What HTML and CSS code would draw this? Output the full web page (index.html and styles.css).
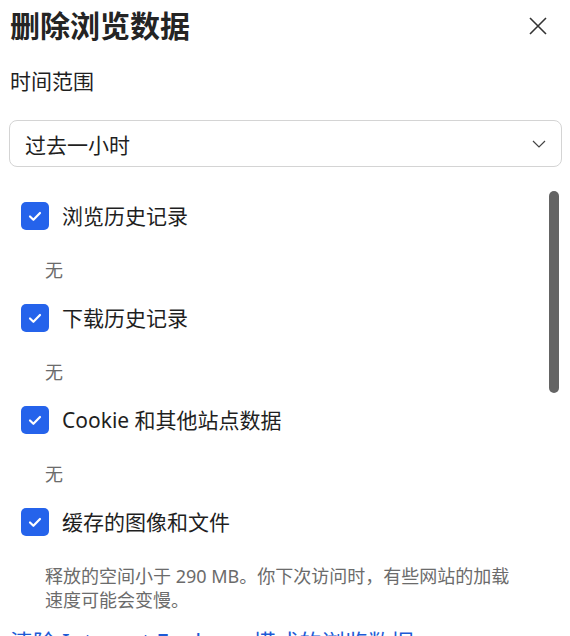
FILE: index.html
```html
<!DOCTYPE html>
<html lang="zh-CN">
<head>
    <meta charset="UTF-8">
    <meta name="viewport" content="width=device-width, initial-scale=1.0">
    <title>删除浏览数据</title>
    <link rel="stylesheet" href="styles.css">
</head>
<body>
    <div class="dialog">
        <div class="header">
            <h1 class="title">删除浏览数据</h1>
            <button class="close" type="button" aria-label="关闭">
                <svg width="18" height="18" viewBox="0 0 18 18"><path d="M1 1 L17 17 M17 1 L1 17" stroke="#333" stroke-width="1.6" fill="none"/></svg>
            </button>
        </div>

        <div class="range-label">时间范围</div>
        <div class="select">
            <span>过去一小时</span>
            <svg width="14" height="8" viewBox="0 0 14 8"><polyline points="1,1 7,7 13,1" stroke="#444" stroke-width="1.2" fill="none"/></svg>
        </div>

        <div class="list">
            <div class="scroll-thumb"></div>

            <div class="item">
                <div class="row">
                    <span class="check"><svg width="28" height="28" viewBox="0 0 28 28"><path d="M9 14.5 L12.4 17.8 L19 11" stroke="#fff" stroke-width="2.2" fill="none" stroke-linecap="round" stroke-linejoin="round"/></svg></span>
                    <span class="label">浏览历史记录</span>
                </div>
                <div class="note">无</div>
            </div>

            <div class="item">
                <div class="row">
                    <span class="check"><svg width="28" height="28" viewBox="0 0 28 28"><path d="M9 14.5 L12.4 17.8 L19 11" stroke="#fff" stroke-width="2.2" fill="none" stroke-linecap="round" stroke-linejoin="round"/></svg></span>
                    <span class="label">下载历史记录</span>
                </div>
                <div class="note">无</div>
            </div>

            <div class="item">
                <div class="row">
                    <span class="check"><svg width="28" height="28" viewBox="0 0 28 28"><path d="M9 14.5 L12.4 17.8 L19 11" stroke="#fff" stroke-width="2.2" fill="none" stroke-linecap="round" stroke-linejoin="round"/></svg></span>
                    <span class="label">Cookie 和其他站点数据</span>
                </div>
                <div class="note">无</div>
            </div>

            <div class="item item-last">
                <div class="row">
                    <span class="check"><svg width="28" height="28" viewBox="0 0 28 28"><path d="M9 14.5 L12.4 17.8 L19 11" stroke="#fff" stroke-width="2.2" fill="none" stroke-linecap="round" stroke-linejoin="round"/></svg></span>
                    <span class="label">缓存的图像和文件</span>
                </div>
                <div class="note">释放的空间小于 290 MB。你下次访问时，有些网站的加载<br>速度可能会变慢。</div>
            </div>

            <a class="link" href="#">清除 Internet Explorer 模式的浏览数据</a>
        </div>
    </div>
</body>
</html>
```

FILE: styles.css
```css
html, body { margin: 0; padding: 0; overflow: hidden; background: #fff; }
body { font-family: "Noto Sans", "Noto Sans CJK SC", sans-serif; color: #1f1f1f; }

.dialog { padding: 8px 8px 0 9px; }

.header { display: flex; align-items: center; justify-content: space-between; padding-right: 15px; }
.title { margin: 0; font-size: 30px; line-height: 36px; font-weight: 700; color: #242424; padding-left: 1px; }
.close { border: none; background: none; padding: 0; width: 18px; height: 18px; display: flex; cursor: pointer; }

.range-label { margin-top: 23px; font-size: 21px; line-height: 28px; padding-left: 1px; }

.select { margin-top: 25px; height: 45px; border: 1px solid #d4d4d4; border-radius: 8px; display: flex; align-items: center; justify-content: space-between; padding: 0 15px 0 15px; font-size: 21px; }

.list { position: relative; padding-top: 35px; }
.scroll-thumb { position: absolute; top: 24px; right: 3px; width: 10px; height: 202px; border-radius: 5px; background: #646464; }

.item { margin-bottom: 22px; }
.item-last { margin-bottom: 15px; }
.row { display: flex; align-items: center; gap: 13px; padding-left: 12px; height: 28px; }
.check { width: 28px; height: 28px; border-radius: 5px; background: #2563eb; display: flex; }
.label { font-size: 21px; line-height: 28px; }

.note { margin-top: 28px; padding-left: 36px; font-size: 18px; line-height: 24px; color: #6b6b6b; }

.link { display: block; padding-left: 1px; font-size: 23px; line-height: 31px; color: #1d5bd6; text-decoration: none; }
```
